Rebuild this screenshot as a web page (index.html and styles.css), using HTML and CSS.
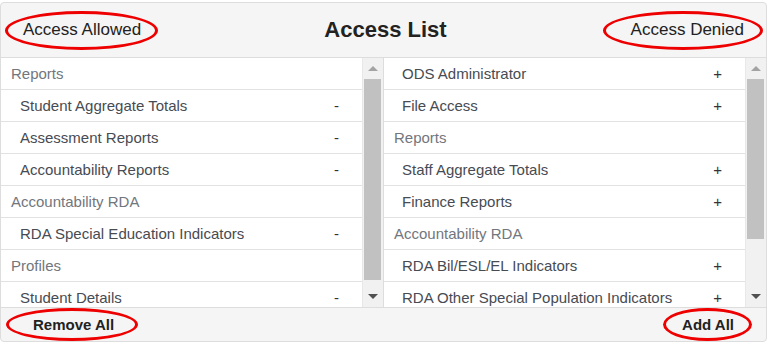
FILE: index.html
```html
<!DOCTYPE html>
<html lang="en">
	<head>
		<meta charset="UTF-8" />
		<meta name="viewport" content="width=device-width, initial-scale=1.0" />
		<title>Access List</title>
		<link rel="stylesheet" href="styles.css">
	</head>
	<body>
		<div class="panel">
			<div class="panel-heading">
				<span class="side-label marked marked-allowed">Access Allowed</span>
				<h3 class="title">Access List</h3>
				<span class="side-label side-right marked marked-denied">Access Denied</span>
			</div>

			<div class="lists">
				<div class="column">
					<ul class="access-list">
						<li class="group">Reports</li>
						<li class="item"><span>Student Aggregate Totals</span><span class="sign">-</span></li>
						<li class="item"><span>Assessment Reports</span><span class="sign">-</span></li>
						<li class="item"><span>Accountability Reports</span><span class="sign">-</span></li>
						<li class="group">Accountability RDA</li>
						<li class="item"><span>RDA Special Education Indicators</span><span class="sign">-</span></li>
						<li class="group">Profiles</li>
						<li class="item"><span>Student Details</span><span class="sign">-</span></li>
					</ul>
					<div class="scrollbar">
						<div class="sb-button"><span class="arrow-up"></span></div>
						<div class="sb-track"><div class="sb-thumb thumb-left"></div></div>
						<div class="sb-button"><span class="arrow-down"></span></div>
					</div>
				</div>
				<div class="column column-right">
					<ul class="access-list">
						<li class="item"><span>ODS Administrator</span><span class="sign">+</span></li>
						<li class="item"><span>File Access</span><span class="sign">+</span></li>
						<li class="group">Reports</li>
						<li class="item"><span>Staff Aggregate Totals</span><span class="sign">+</span></li>
						<li class="item"><span>Finance Reports</span><span class="sign">+</span></li>
						<li class="group">Accountability RDA</li>
						<li class="item"><span>RDA Bil/ESL/EL Indicators</span><span class="sign">+</span></li>
						<li class="item"><span>RDA Other Special Population Indicators</span><span class="sign">+</span></li>
					</ul>
					<div class="scrollbar">
						<div class="sb-button"><span class="arrow-up"></span></div>
						<div class="sb-track"><div class="sb-thumb thumb-right"></div></div>
						<div class="sb-button"><span class="arrow-down"></span></div>
					</div>
				</div>
			</div>

			<div class="panel-footer">
				<button class="link-btn marked marked-remove">Remove All</button>
				<button class="link-btn marked marked-add">Add All</button>
			</div>
		</div>
	</body>
</html>
```

FILE: styles.css
```css
body {
	margin: 0;
	font-family: "Liberation Sans", Arial, sans-serif;
	color: #222;
}
.panel {
	margin: 2px 2px 0 0;
	width: 765px;
	border: 1px solid #ddd;
	border-radius: 4px;
	background: #f5f5f5;
	overflow: hidden;
}
.panel-heading {
	display: grid;
	grid-template-columns: 1fr auto 1fr;
	align-items: center;
	height: 54px;
	padding: 0 22px;
	border-bottom: 1px solid #ddd;
}
.side-label {
	justify-self: start;
	font-size: 17px;
	line-height: 20px;
}
.side-right {
	justify-self: end;
}
.title {
	margin: 0 0 0 4px;
	font-size: 22px;
	font-weight: 700;
	color: #222;
}
.lists {
	display: flex;
	height: 249px;
	background: #fff;
	border-bottom: 1px solid #ddd;
}
.column {
	flex: 1;
	display: flex;
	min-width: 0;
}
.column-right {
	border-left: 1px solid #ddd;
}
.access-list {
	flex: 1;
	margin: 0;
	padding: 0;
	list-style: none;
	overflow: hidden;
	font-size: 15px;
}
.access-list li {
	display: flex;
	justify-content: space-between;
	height: 31px;
	line-height: 32px;
	border-bottom: 1px solid #e2e2e2;
	white-space: nowrap;
}
.group {
	padding-left: 10px;
	color: #72767d;
}
.item {
	padding: 0 23px 0 18px;
	color: #474b52;
}
.column:first-child .item {
	padding-left: 19px;
}
.sign {
	color: #333;
}
.scrollbar {
	display: flex;
	flex-direction: column;
	width: 20px;
	border-left: 1px solid #e8e8e8;
	background: #f1f1f1;
}
.sb-button {
	display: flex;
	align-items: center;
	justify-content: center;
	height: 21px;
}
.sb-track {
	flex: 1;
}
.sb-thumb {
	margin: 0 2px 0 1px;
	background: #c1c1c1;
}
.thumb-left {
	height: 201px;
}
.thumb-right {
	height: 160px;
}
.arrow-up {
	border-left: 5px solid transparent;
	border-right: 5px solid transparent;
	border-bottom: 5px solid #a3a3a3;
}
.arrow-down {
	border-left: 5px solid transparent;
	border-right: 5px solid transparent;
	border-top: 5px solid #505050;
}
.panel-footer {
	display: flex;
	justify-content: space-between;
	align-items: center;
	height: 33px;
	padding: 0 32px;
}
.link-btn {
	padding: 0;
	border: none;
	background: none;
	font-family: "Liberation Sans", Arial, sans-serif;
	font-size: 15px;
	font-weight: 700;
	line-height: 17px;
	color: #222;
}

/* red annotation rings */
.marked {
	position: relative;
}
.marked::after {
	content: "";
	position: absolute;
	border: 3px solid #ee0000;
	border-radius: 50%;
	pointer-events: none;
}
.marked-allowed::after {
	inset: -9px -17px -10px -18px;
}
.marked-denied::after {
	inset: -9px -19px -10px -28px;
}
.marked-remove::after {
	inset: -8px -24px -8px -27px;
}
.marked-add::after {
	inset: -8px -18px -8px -19px;
}
```
